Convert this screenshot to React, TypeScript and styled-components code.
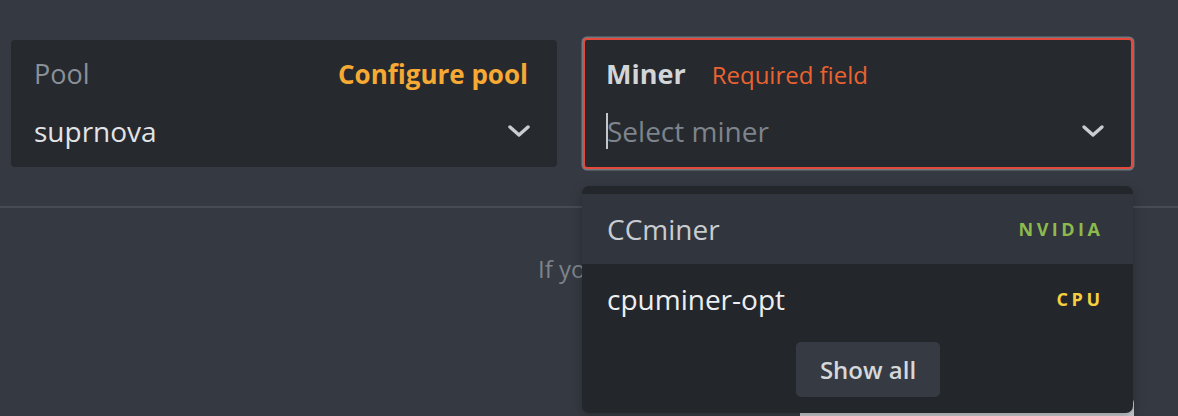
import React from 'react'
import styled, { createGlobalStyle } from 'styled-components'

const GlobalStyle = createGlobalStyle`
  html, body {
    margin: 0;
    padding: 0;
    background: #353a42;
    font-family: "Open Sans", "Noto Sans", sans-serif;
    overflow: hidden;
  }
`

const Page = styled.div`
  width: 1178px;
  height: 416px;
  background: #353a42;
  position: relative;
  overflow: hidden;
`

const Fields = styled.div`
  display: flex;
  align-items: center;
  gap: 26px;
  padding: 38px 0 0 11px;
`

const Field = styled.div<{ $invalid?: boolean }>`
  position: relative;
  box-sizing: border-box;
  width: ${p => (p.$invalid ? '550px' : '546px')};
  height: ${p => (p.$invalid ? '131px' : '127px')};
  background: #26292e;
  border-radius: 4px;
  border: ${p => (p.$invalid ? '2px solid #e5493b' : 'none')};
  box-shadow: ${p => (p.$invalid ? '0 0 0 1.5px #737880' : 'none')};
  padding: ${p => (p.$invalid ? '15px 26px 0 21px' : '15px 26px 0 23px')};
  display: flex;
  flex-direction: column;
`

const LabelRow = styled.div`
  display: flex;
  align-items: baseline;
  height: 38px;
  line-height: 38px;
`

const Label = styled.span<{ $strong?: boolean }>`
  font-size: 27px;
  font-weight: ${p => (p.$strong ? 700 : 400)};
  color: ${p => (p.$strong ? '#d3d6d9' : '#8a9098')};
`

const ConfigureLink = styled.a`
  margin-left: auto;
  margin-right: 3px;
  font-size: 26px;
  font-weight: 700;
  color: #f6aa34;
  text-decoration: none;
`

const ErrorText = styled.span`
  margin-left: 26px;
  font-size: 24px;
  color: #ea6331;
`

const ValueRow = styled.div`
  display: flex;
  align-items: center;
  height: 44px;
  line-height: 44px;
  margin-top: 16px;
`

const Value = styled.span`
  font-size: 28px;
  color: #e1e3e6;
`

const Caret = styled.span`
  width: 2px;
  height: 36px;
  background: #c4c7ca;
  margin-right: -1px;
`

const Placeholder = styled.span`
  font-size: 28px;
  color: #7e848c;
`

const ChevronBox = styled.span`
  margin-left: auto;
  display: flex;
`

const Divider = styled.div`
  height: 2px;
  background: #474c54;
  margin-top: 37px;
`

const Notice = styled.p`
  margin: 44px 0 0 538px;
  font-size: 24px;
  color: #7d838b;
  white-space: nowrap;
`

const SaveButton = styled.div`
  position: absolute;
  left: 800px;
  top: 397px;
  width: 334px;
  height: 60px;
  background: #c9ccd0;
  border-radius: 6px;
`

const Menu = styled.div`
  position: absolute;
  left: -3px;
  top: 146px;
  width: 551px;
  height: 227px;
  box-sizing: border-box;
  background: #23262b;
  border-radius: 7px;
  padding-top: 8px;
  box-shadow: 0 4px 12px rgba(0, 0, 0, 0.25);
  z-index: 2;
`

const Option = styled.div<{ $active?: boolean }>`
  height: 70px;
  display: flex;
  align-items: center;
  padding: 0 33px 0 25px;
  background: ${p => (p.$active ? '#31353d' : 'transparent')};
`

const OptionName = styled.span<{ $active?: boolean }>`
  font-size: 28px;
  color: ${p => (p.$active ? '#c9ccd0' : '#eceef0')};
`

const Tag = styled.span<{ $color: string }>`
  margin-left: auto;
  font-size: 18px;
  font-weight: 700;
  letter-spacing: 3.5px;
  margin-right: -3.5px;
  color: ${p => p.$color};
`

const MenuFooter = styled.div`
  display: flex;
  justify-content: center;
  padding: 8px 0 0 21px;
`

const ShowAll = styled.button`
  width: 144px;
  height: 55px;
  border: none;
  border-radius: 5px;
  background: #363b43;
  color: #d5d8db;
  font-family: "Open Sans", "Noto Sans", sans-serif;
  font-size: 24px;
  font-weight: 600;
  cursor: pointer;
`

const Chevron = () => (
  <svg width="24" height="16" viewBox="0 0 24 16">
    <polyline
      points="3,4 12,12 21,4"
      fill="none"
      stroke="#c9cdd1"
      strokeWidth="3.4"
      strokeLinecap="round"
      strokeLinejoin="round"
    />
  </svg>
)

const miners = [
  { name: 'CCminer', tag: 'NVIDIA', color: '#8cba4c', active: true },
  { name: 'cpuminer-opt', tag: 'CPU', color: '#f6d03d', active: false },
]

export default function App() {
  return (
    <Page>
      <GlobalStyle />
      <Fields>
        <Field>
          <LabelRow>
            <Label>Pool</Label>
            <ConfigureLink>Configure pool</ConfigureLink>
          </LabelRow>
          <ValueRow>
            <Value>suprnova</Value>
            <ChevronBox>
              <Chevron />
            </ChevronBox>
          </ValueRow>
        </Field>
        <Field $invalid>
          <LabelRow>
            <Label $strong>Miner</Label>
            <ErrorText>Required field</ErrorText>
          </LabelRow>
          <ValueRow>
            <Caret />
            <Placeholder>Select miner</Placeholder>
            <ChevronBox>
              <Chevron />
            </ChevronBox>
          </ValueRow>
          <Menu>
            {miners.map(m => (
              <Option key={m.name} $active={m.active}>
                <OptionName $active={m.active}>{m.name}</OptionName>
                <Tag $color={m.color}>{m.tag}</Tag>
              </Option>
            ))}
            <MenuFooter>
              <ShowAll>Show all</ShowAll>
            </MenuFooter>
          </Menu>
        </Field>
      </Fields>
      <Divider />
      <Notice>If you don't see your miner here, click Show all</Notice>
      <SaveButton />
    </Page>
  )
}
